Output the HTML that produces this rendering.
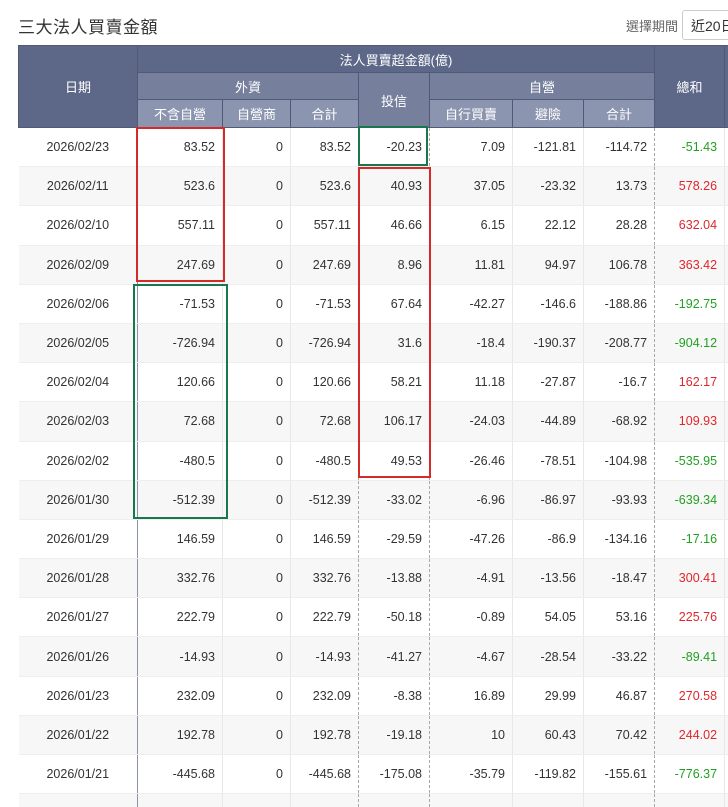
<!DOCTYPE html>
<html><head><meta charset="utf-8">
<style>
html,body{margin:0;padding:0;background:#fff;width:728px;height:807px;overflow:hidden;}
body{font-family:"Liberation Sans","Noto Sans CJK TC",sans-serif;color:#333;position:relative;}
.title{position:absolute;left:18px;top:13px;font-size:17px;color:#333;letter-spacing:0.5px;}
.sel{position:absolute;left:626px;top:16px;font-size:13px;color:#666;}
.box{position:absolute;left:682px;top:10px;width:60px;height:30px;border:1px solid #ccc;border-radius:3px;font-size:14px;line-height:30px;padding-left:8px;box-sizing:border-box;color:#333;}
table{position:absolute;left:18px;top:45px;border-collapse:collapse;table-layout:fixed;width:720px;font-size:12.5px;}
th{color:#fff;font-weight:normal;text-align:center;border:1px solid #4f5a78;padding:0;font-size:13px;}
th.a{background:#5d6888;}
th.b{background:#76809d;}
th.c{background:#8c95b0;}
tr.h1 th{height:26px;} tr.h2 th{height:26px;} tr.h3 th{height:27px;}
td{height:39.2px;padding:0 7px 0 0;text-align:right;border-left:1px solid #e8e8e8;border-right:none;border-bottom:1px solid #eee;box-sizing:border-box;white-space:nowrap;}
td:first-child{text-align:center;padding:0;border-right:1px solid #8a93aa;border-left:none;}
td:nth-child(2){border-left:1px solid #8a93aa;}
td:nth-child(5),td:nth-child(6),td:nth-child(9){border-left:1px dashed #a8a8a8;}
tbody tr:nth-child(even) td{background:#f7f7f7;}
.p{color:#e0262c;} .n{color:#22a022;}
.r{position:absolute;border:2px solid #d42a2a;box-sizing:border-box;}
.g{position:absolute;border:2px solid #18774b;box-sizing:border-box;}
</style></head><body>
<div class="title">三大法人買賣金額</div>
<div class="sel">選擇期間</div>
<div class="box">近20日</div>
<table>
<colgroup><col style="width:119px"><col style="width:85px"><col style="width:68px"><col style="width:68px"><col style="width:71px"><col style="width:83px"><col style="width:71px"><col style="width:71px"><col style="width:70px"><col style="width:14px"></colgroup>
<thead>
<tr class="h1"><th class="a" rowspan="3">日期</th><th class="a" colspan="7">法人買賣超金額(億)</th><th class="a" rowspan="3">總和</th><th class="a" rowspan="3"></th></tr>
<tr class="h2"><th class="b" colspan="3">外資</th><th class="b" rowspan="2">投信</th><th class="b" colspan="3">自營</th></tr>
<tr class="h3"><th class="c">不含自營</th><th class="c">自營商</th><th class="c">合計</th><th class="c">自行買賣</th><th class="c">避險</th><th class="c">合計</th></tr>
</thead>
<tbody>
<tr><td>2026/02/23</td><td>83.52</td><td>0</td><td>83.52</td><td>-20.23</td><td>7.09</td><td>-121.81</td><td>-114.72</td><td class="n">-51.43</td><td></td></tr>
<tr><td>2026/02/11</td><td>523.6</td><td>0</td><td>523.6</td><td>40.93</td><td>37.05</td><td>-23.32</td><td>13.73</td><td class="p">578.26</td><td></td></tr>
<tr><td>2026/02/10</td><td>557.11</td><td>0</td><td>557.11</td><td>46.66</td><td>6.15</td><td>22.12</td><td>28.28</td><td class="p">632.04</td><td></td></tr>
<tr><td>2026/02/09</td><td>247.69</td><td>0</td><td>247.69</td><td>8.96</td><td>11.81</td><td>94.97</td><td>106.78</td><td class="p">363.42</td><td></td></tr>
<tr><td>2026/02/06</td><td>-71.53</td><td>0</td><td>-71.53</td><td>67.64</td><td>-42.27</td><td>-146.6</td><td>-188.86</td><td class="n">-192.75</td><td></td></tr>
<tr><td>2026/02/05</td><td>-726.94</td><td>0</td><td>-726.94</td><td>31.6</td><td>-18.4</td><td>-190.37</td><td>-208.77</td><td class="n">-904.12</td><td></td></tr>
<tr><td>2026/02/04</td><td>120.66</td><td>0</td><td>120.66</td><td>58.21</td><td>11.18</td><td>-27.87</td><td>-16.7</td><td class="p">162.17</td><td></td></tr>
<tr><td>2026/02/03</td><td>72.68</td><td>0</td><td>72.68</td><td>106.17</td><td>-24.03</td><td>-44.89</td><td>-68.92</td><td class="p">109.93</td><td></td></tr>
<tr><td>2026/02/02</td><td>-480.5</td><td>0</td><td>-480.5</td><td>49.53</td><td>-26.46</td><td>-78.51</td><td>-104.98</td><td class="n">-535.95</td><td></td></tr>
<tr><td>2026/01/30</td><td>-512.39</td><td>0</td><td>-512.39</td><td>-33.02</td><td>-6.96</td><td>-86.97</td><td>-93.93</td><td class="n">-639.34</td><td></td></tr>
<tr><td>2026/01/29</td><td>146.59</td><td>0</td><td>146.59</td><td>-29.59</td><td>-47.26</td><td>-86.9</td><td>-134.16</td><td class="n">-17.16</td><td></td></tr>
<tr><td>2026/01/28</td><td>332.76</td><td>0</td><td>332.76</td><td>-13.88</td><td>-4.91</td><td>-13.56</td><td>-18.47</td><td class="p">300.41</td><td></td></tr>
<tr><td>2026/01/27</td><td>222.79</td><td>0</td><td>222.79</td><td>-50.18</td><td>-0.89</td><td>54.05</td><td>53.16</td><td class="p">225.76</td><td></td></tr>
<tr><td>2026/01/26</td><td>-14.93</td><td>0</td><td>-14.93</td><td>-41.27</td><td>-4.67</td><td>-28.54</td><td>-33.22</td><td class="n">-89.41</td><td></td></tr>
<tr><td>2026/01/23</td><td>232.09</td><td>0</td><td>232.09</td><td>-8.38</td><td>16.89</td><td>29.99</td><td>46.87</td><td class="p">270.58</td><td></td></tr>
<tr><td>2026/01/22</td><td>192.78</td><td>0</td><td>192.78</td><td>-19.18</td><td>10</td><td>60.43</td><td>70.42</td><td class="p">244.02</td><td></td></tr>
<tr><td>2026/01/21</td><td>-445.68</td><td>0</td><td>-445.68</td><td>-175.08</td><td>-35.79</td><td>-119.82</td><td>-155.61</td><td class="n">-776.37</td><td></td></tr>
<tr><td>&nbsp;</td><td></td><td></td><td></td><td></td><td></td><td></td><td></td><td></td><td></td></tr>
</tbody>
</table>
<div class="r" style="left:136px;top:127px;width:89px;height:155px;"></div>
<div class="g" style="left:133px;top:284px;width:95px;height:235px;"></div>
<div class="g" style="left:358px;top:126px;width:70px;height:40px;"></div>
<div class="r" style="left:358px;top:167px;width:73px;height:311px;"></div>
</body></html>
